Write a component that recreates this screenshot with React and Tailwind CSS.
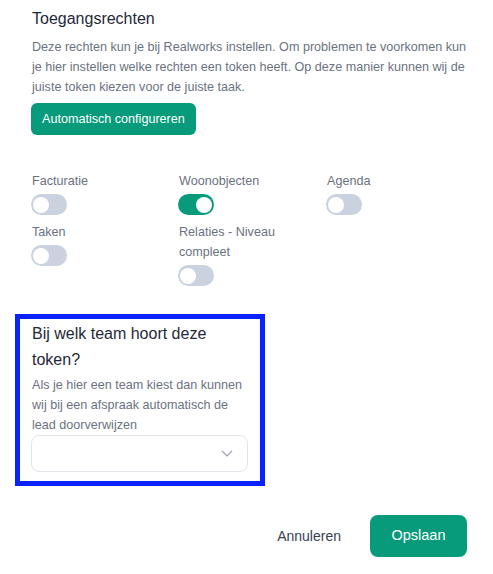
import { useState } from 'react';

const Toggle = ({ on, onClick }) => (
  <button
    onClick={onClick}
    className={`relative block w-9 h-[21px] rounded-full transition-colors ${on ? 'bg-[#079a7b]' : 'bg-[#c9d2de]'}`}
  >
    <span className={`absolute top-[2.5px] w-4 h-4 rounded-full bg-white transition-all ${on ? 'left-[18px]' : 'left-[2px]'}`}></span>
  </button>
);

const App = () => {
  const [rights, setRights] = useState({
    facturatie: false,
    woonobjecten: true,
    agenda: false,
    taken: false,
    relaties: false,
  });

  const flip = (key) => setRights({ ...rights, [key]: !rights[key] });

  const items = [
    { key: 'facturatie', label: 'Facturatie' },
    { key: 'woonobjecten', label: 'Woonobjecten' },
    { key: 'agenda', label: 'Agenda' },
    { key: 'taken', label: 'Taken' },
    { key: 'relaties', label: 'Relaties - Niveau compleet' },
  ];

  return (
    <div className="w-[493px] h-[574px] bg-white font-['Liberation_Sans',Arial,sans-serif] overflow-hidden">
      {/* RECHTEN */}
      <div className="pl-8 pr-6 pt-[7px]">
        <h2 className="text-[16px] leading-6 text-[#1f2937]">Toegangsrechten</h2>
        <p className="mt-[6px] text-[12.6px] leading-5 text-[#6b7280]">
          Deze rechten kun je bij Realworks instellen. Om problemen te voorkomen kun je hier instellen welke rechten een token heeft. Op deze manier kunnen wij de juiste token kiezen voor de juiste taak.
        </p>
        <button className="mt-[6px] -ml-px block h-8 px-[11px] rounded-md bg-[#079a7b] text-white text-[12.6px]">
          Automatisch configureren
        </button>

        <div className="mt-[36px] grid grid-cols-[147px_148px_148px] gap-y-[7px]">
          {items.map((it) => (
            <div key={it.key} className="flex flex-col items-start">
              <span className="text-[12.6px] leading-5 text-[#6b7280] max-w-[110px]">{it.label}</span>
              <div className="mt-[3px] -ml-px flex">
                <Toggle on={rights[it.key]} onClick={() => flip(it.key)} />
              </div>
            </div>
          ))}
        </div>
      </div>

      {/* TEAM */}
      <div className="mt-[28px] ml-[15px] w-[250px] border-[5px] border-[#0a22ff] px-3 pt-[2px] pb-[9px]">
        <h3 className="text-[16px] leading-[26px] text-[#1f2937]">Bij welk team hoort deze token?</h3>
        <p className="mt-[2px] text-[12.6px] leading-5 text-[#6b7280]">
          Als je hier een team kiest dan kunnen wij bij een afspraak automatisch de lead doorverwijzen
        </p>
        <div className="mt-0 -ml-px h-[37px] rounded-lg border border-[#e2e6ec] flex items-center justify-end pr-[14px]">
          <svg width="12" height="7" viewBox="0 0 12 7" fill="none" stroke="#9ca3af" strokeWidth="1.2">
            <path d="M1 1l5 5 5-5" />
          </svg>
        </div>
      </div>

      {/* FOOTER */}
      <div className="mt-[29px] flex items-center justify-end pr-[26px] gap-[29px]">
        <button className="text-[14px] text-[#374151]">Annuleren</button>
        <button className="w-[97px] h-[42px] rounded-lg bg-[#079a7b] text-white text-[14.5px]">Opslaan</button>
      </div>
    </div>
  );
};

export default App;
